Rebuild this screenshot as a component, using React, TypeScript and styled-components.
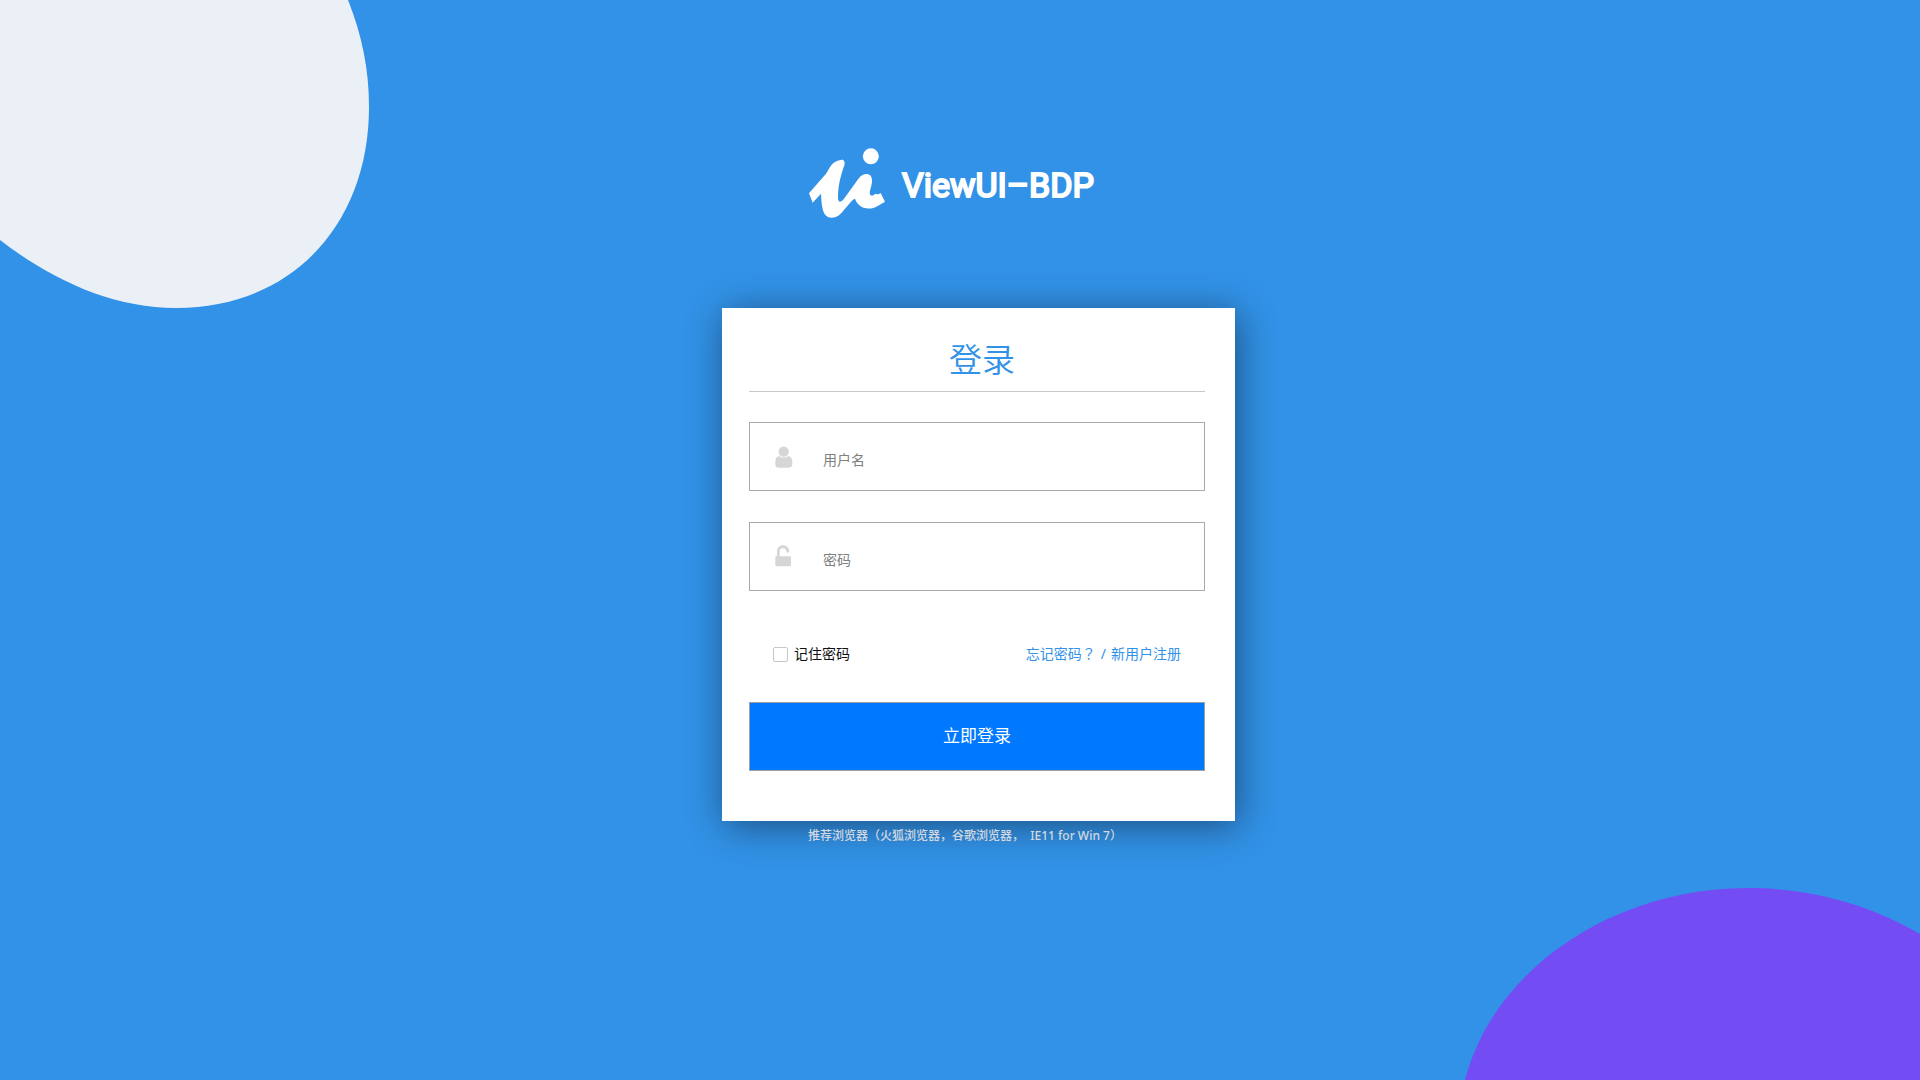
import React from 'react';
import styled, { createGlobalStyle } from 'styled-components';

const GlobalStyle = createGlobalStyle`
  *, *::before, *::after { box-sizing: border-box; }
  body {
    margin: 0;
    background: #3292e7;
    font-family: "Noto Sans", "Noto Sans CJK SC", sans-serif;
    font-size: 14px;
    line-height: 20px;
  }
`;

const Page = styled.main`
  position: relative;
  min-height: 100vh;
  overflow: hidden;
  display: flex;
  flex-direction: column;
  align-items: center;
  padding: 148px 0 48px 37px;
`;

const Blob = styled.svg<{ $corner: 'topLeft' | 'bottomRight' }>`
  position: absolute;
  ${({ $corner }) => ($corner === 'topLeft' ? 'top: 0; left: 0;' : 'bottom: 0; right: 0;')}
`;

const Column = styled.div`
  position: relative;
  width: 100%;
  max-width: 513px;
`;

const Brand = styled.header`
  display: flex;
  align-items: center;
  gap: 17px;
  padding-left: 87px;
  margin-bottom: 90px;
  color: #fff;
`;

const BrandName = styled.span`
  padding-top: 4px;
  font-family: Roboto, sans-serif;
  font-size: 34px;
  font-weight: 400;
  line-height: 40px;
  white-space: nowrap;
  -webkit-text-stroke: 2px #fff;
  stroke-linejoin: round;
`;

const Card = styled.form`
  display: flex;
  flex-direction: column;
  padding: 26px 30px 50px 27px;
  background: #fff;
  box-shadow: 3px 5px 36px rgba(0, 0, 0, 0.45);
`;

const Title = styled.h1`
  margin: 0 0 30px;
  padding: 0 0 9px 10px;
  border-bottom: 1px solid #c8c8c8;
  color: #3292e7;
  font-family: "Noto Sans CJK SC", sans-serif;
  font-size: 33px;
  font-weight: 350;
  line-height: 48px;
  text-align: center;
`;

const Field = styled.label`
  display: flex;
  align-items: center;
  height: 69px;
  padding-left: 25px;
  border: 1px solid #a9a9a9;

  & + & { margin-top: 31px; }
`;

const FieldIcon = styled.svg`
  flex: none;
  width: 18px;
  height: 22px;
  fill: #d6d6d6;
`;

const FieldInput = styled.input`
  flex: 1;
  min-width: 0;
  height: 100%;
  margin-left: 30px;
  padding: 6px 16px 0 0;
  border: 0;
  outline: 0;
  background: transparent;
  color: #333;
  font: inherit;

  &::placeholder { color: #808080; opacity: 1; }
`;

const Options = styled.div`
  display: flex;
  align-items: center;
  justify-content: space-between;
  margin: 53px 24px 38px;
`;

const Remember = styled.label`
  display: flex;
  align-items: center;
  gap: 6px;
  color: #111;
`;

const Checkbox = styled.input`
  appearance: none;
  width: 15px;
  height: 15px;
  margin: 0;
  border: 1px solid #c6c6c6;
  border-radius: 2px;
  background: #fff;

  &:checked { background: #0079ff; }
`;

const Links = styled.nav`
  display: flex;
  gap: 5px;
  color: #3292e7;
  font-family: "Noto Sans", "Noto Sans CJK TC", sans-serif;
`;

const Link = styled.a`
  color: inherit;
  text-decoration: none;
`;

const Submit = styled.button`
  height: 69px;
  padding: 0 0 2px;
  border: 1px solid #a0a0a0;
  background: #0079ff;
  color: #fff;
  font: inherit;
  font-size: 17px;
  cursor: pointer;
`;

const Note = styled.p`
  margin: 6px 0 0;
  padding-left: 86px;
  color: #d3d8e0;
  font-size: 12px;
  font-weight: 500;
  line-height: 18px;
  white-space: nowrap;
`;

export default function App() {
  return (
    <>
      <GlobalStyle />
      <Page>
        <Blob $corner="topLeft" width="369" height="308" viewBox="0 0 369 308" aria-hidden="true">
          <path fill="#ebf0f7" d="M0 0H348C362 35 369 70 369 107C369 223 293 308 176 308C112 308 52 280 0 240Z" />
        </Blob>
        <Blob $corner="bottomRight" width="455" height="192" viewBox="1465 888 455 192" aria-hidden="true">
          <path fill="#734df3" d="M1465 1080C1494 968 1614 888 1748 888C1812 888 1870 905 1920 934V1080Z" />
        </Blob>
        <Column>
          <Brand>
            <svg width="76" height="70" viewBox="57 53 228 210" fill="#fff" aria-hidden="true">
              <circle cx="242.500" cy="78" r="24" />
              <path d="M57 189L108 130C116 118 121 104 131 97C138 92 147 89 155 88C163 88 166 96 163 105C155 128 144 163 144 198Q144 214 149 214C158 214 165 200 175 187L202 150C209 139 215 133 227 131C242 131 246 139 246 152C246 168 237 182 240 192C245 201 250 193 258 190Q264 194 272 188L285 214L263 227C251 234 240 236 229 234C212 231 200 220 195 205C187 207 176 223 160 241C150 253 141 262 125 262C108 262 101 249 98 236C94 220 94 204 93 190L68 217Z" />
            </svg>
            <BrandName>ViewUI–BDP</BrandName>
          </Brand>
          <Card onSubmit={(event) => event.preventDefault()}>
            <Title>登录</Title>
            <Field>
              <FieldIcon viewBox="0 0 54 66" aria-hidden="true">
                <circle cx="26" cy="17" r="15.500" />
                <path d="M13 31C18 36 34 36 39 31C47 31 52 38 52 48V55Q52 65 42 65H10Q1 65 1 55V48C1 38 5 31 13 31Z" />
              </FieldIcon>
              <FieldInput type="text" placeholder="用户名" aria-label="用户名" />
            </Field>
            <Field>
              <FieldIcon viewBox="0 2 54 66" overflow="visible" aria-hidden="true">
                <path d="M6 33V18C6 7 14 0 24 0C34 0 42 7 43 18Q43 22 39 22Q35 22 34 18C33 12 30 9 24 9C18 9 14 12 14 18V33H45Q48 33 48 36V60Q48 63 45 63H4Q1 63 1 60V36Q1 33 4 33Z" />
              </FieldIcon>
              <FieldInput type="password" placeholder="密码" aria-label="密码" />
            </Field>
            <Options>
              <Remember>
                <Checkbox type="checkbox" />
                记住密码
              </Remember>
              <Links>
                <Link href="#forgot">忘记密码？</Link>
                <span>/</span>
                <Link href="#register">新用户注册</Link>
              </Links>
            </Options>
            <Submit type="submit">立即登录</Submit>
          </Card>
          <Note>推荐浏览器（火狐浏览器，谷歌浏览器，{'\u00a0\u00a0'}IE11 for Win 7）</Note>
        </Column>
      </Page>
    </>
  );
}
